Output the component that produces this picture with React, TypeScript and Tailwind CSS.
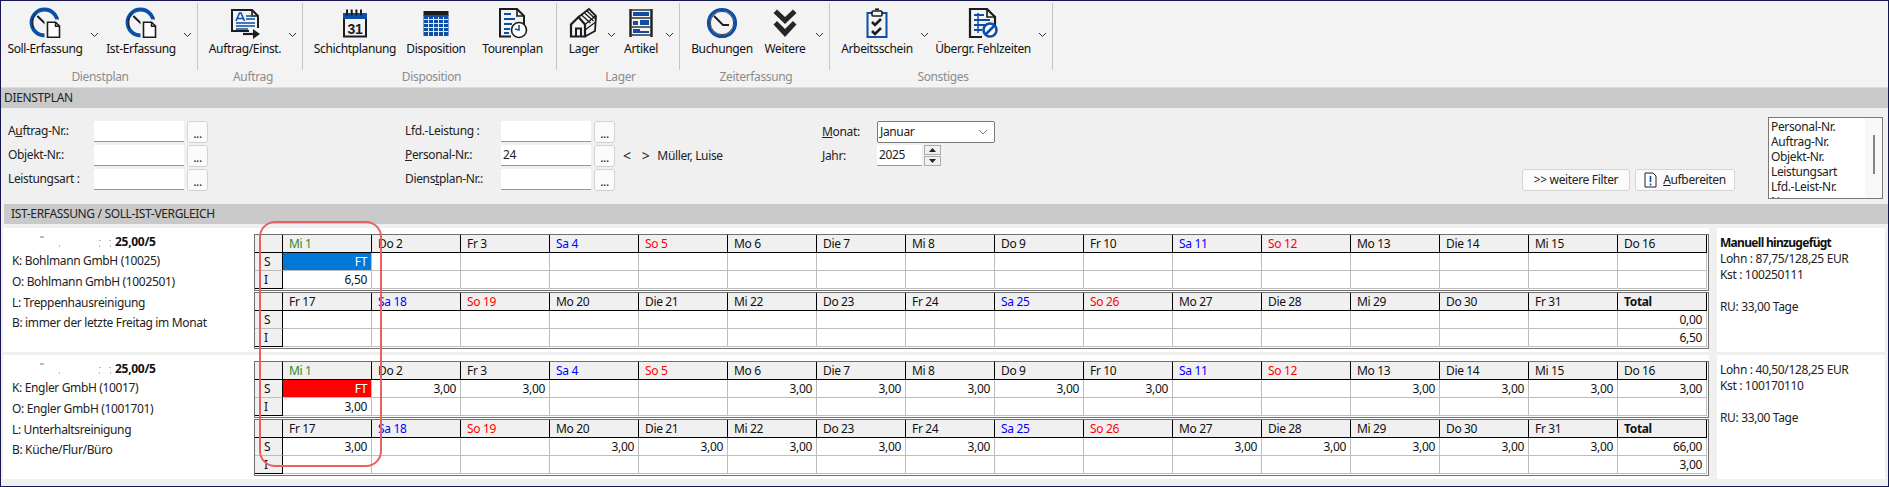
import React from "react";

const Chev = ({ w }: { w: string }) => (
  <div className={`${w} flex justify-center pt-[31px]`}>
    <svg width="9" height="6" viewBox="0 0 9 6" fill="none" className="shrink-0">
      <path d="M1 1l3.5 3.5L8 1" stroke="#333" strokeWidth="1" />
    </svg>
  </div>
);

const B = "#0d4ea6";
const K = "#1c1c1c";

const ClockDoc = () => (
  <svg width="32" height="32" viewBox="0 0 32 32" fill="none">
    <circle cx="15.5" cy="15.5" r="13" stroke={B} strokeWidth="3.8" />
    <path d="M5.2 22A12 12 0 0 1 7 6.5" stroke={K} strokeWidth="1" />
    <path d="M8.3 9l9.4 9" stroke={K} strokeWidth="2" />
    <rect x="15.5" y="12.5" width="17" height="19" fill="#f3f3f3" />
    <path d="M18.5 15.2h8l4 4v11h-12z" fill="#fff" stroke={K} strokeWidth="1.6" />
    <path d="M26.5 15.2v4h4" stroke={K} strokeWidth="1.4" />
  </svg>
);
const AuftragIcon = () => (
  <svg width="32" height="32" viewBox="0 0 32 32" fill="none">
    <path d="M20 24H3V3h20l6 6v12" stroke={K} strokeWidth="2" />
    <path d="M23 3v6h6" stroke={K} strokeWidth="1.6" />
    <path d="M7 14l3.5-8h1.5l3.5 8M8.5 11.5h6" stroke={B} strokeWidth="1.6" />
    <path d="M17 9h7M17 12h9M7 16h19M7 19h19M7 22h12" stroke={B} strokeWidth="1.6" />
    <path d="M14 27h11" stroke={K} strokeWidth="2.2" />
    <path d="M24 22l7 5-7 5z" fill={K} />
  </svg>
);
const CalIcon = () => (
  <svg width="32" height="32" viewBox="0 0 32 32" fill="none">
    <rect x="4" y="6" width="24" height="6" fill={B} />
    <path d="M8 2.5v6M12.7 2.5v6M17.4 2.5v6M22 2.5v6" stroke={K} strokeWidth="2" />
    <path d="M5 12v17.5h22V12" stroke={K} strokeWidth="2" />
    <text x="16" y="26.5" textAnchor="middle" fontSize="14" fontWeight="700" fill={K} fontFamily="Liberation Sans, sans-serif">31</text>
  </svg>
);
const GridIcon = () => (
  <svg width="32" height="32" viewBox="0 0 32 32" fill="none">
    <rect x="3.5" y="4" width="25" height="5" fill={K} />
    <rect x="3.5" y="8" width="25" height="21" fill={B} />
    <path d="M8.5 10v19M13.5 10v19M18.5 10v19M23.5 10v19M4 12.5h24M4 16.5h24M4 20.5h24M4 24.5h24" stroke="#dfe8f5" strokeWidth="1" />
  </svg>
);
const TourIcon = () => (
  <svg width="32" height="32" viewBox="0 0 32 32" fill="none">
    <path d="M14 29.5H3V2h17l7 7v9" stroke={K} strokeWidth="2" />
    <path d="M20 2v7h7" stroke={K} strokeWidth="1.6" />
    <path d="M7 7h7M7 12h11M7 17h8M7 22h6M7 26h5" stroke={B} strokeWidth="2" />
    <circle cx="22" cy="23" r="7.5" fill="#fff" stroke={K} strokeWidth="1.6" />
    <path d="M22 18v5l-4-1" stroke={B} strokeWidth="1.6" />
  </svg>
);
const LagerIcon = () => (
  <svg width="32" height="32" viewBox="0 0 32 32" fill="none">
    <path d="M3 29.5V17.5L10.5 10l6.5 7.5v12z" stroke={K} strokeWidth="2.2" fill="#f3f3f3" />
    <path d="M8 29.5v-8h5v8" stroke={K} strokeWidth="2" />
    <path d="M10.5 10L21 2l7 7-1 15-10 5.5" stroke={K} strokeWidth="1.8" />
    <path d="M13.5 8l9 8M16.5 6l9 8M19 4l8 7.5M17 17.5L27.5 9M17 23l10-7.5" stroke={K} strokeWidth="1.3" />
  </svg>
);
const ShelfIcon = () => (
  <svg width="32" height="32" viewBox="0 0 32 32" fill="none">
    <path d="M5.5 2v28M26.5 2v28" stroke={K} strokeWidth="2.4" />
    <path d="M5 3h22M5 11h22M5 20h22M5 28h22" stroke="#333" strokeWidth="1.6" />
    <rect x="8" y="5" width="16" height="4" fill={B} />
    <rect x="8" y="14" width="5" height="4" fill={B} />
    <rect x="15" y="13" width="9" height="5" fill={B} />
    <rect x="8" y="22" width="7" height="4" fill={B} />
    <rect x="15" y="24" width="9" height="2" fill={B} />
  </svg>
);
const BigClock = () => (
  <svg width="32" height="32" viewBox="0 0 32 32" fill="none">
    <circle cx="16" cy="16" r="13.5" stroke={B} strokeWidth="3.2" fill="#f3f3f3" />
    <circle cx="16" cy="16" r="11.6" stroke={K} strokeWidth="0.8" />
    <path d="M8 9l9 9h6" stroke={K} strokeWidth="1.8" />
  </svg>
);
const DoubleDown = () => (
  <svg width="32" height="32" viewBox="0 0 32 32" fill="#262626">
    <path d="M8 2.5L4.5 6 16 17 27.5 6 24 2.5l-8 7.5z" />
    <path d="M8 14l-3.5 3.5L16 30l11.5-12.5L24 14l-8 8z" />
  </svg>
);
const Clip = () => (
  <svg width="32" height="32" viewBox="0 0 32 32" fill="none">
    <path d="M11 6H6.5v24h19V6H21" stroke={B} strokeWidth="2" />
    <rect x="11" y="4" width="10" height="5" rx="1" fill="#f3f3f3" stroke={K} strokeWidth="1.6" />
    <path d="M14 2.2h4" stroke={K} strokeWidth="1.6" />
    <path d="M11 15l3 3 6-6M11 24l3 3 6-6" stroke={K} strokeWidth="2.6" />
  </svg>
);
const FehlIcon = () => (
  <svg width="32" height="32" viewBox="0 0 32 32" fill="none">
    <path d="M15 30H3V2h17l8 8v8" stroke={K} strokeWidth="2.2" fill="#f3f3f3" />
    <path d="M20 2v8h8" stroke={K} strokeWidth="1.6" />
    <path d="M7 8h10M7 13h16M7 18h11M7 23h8" stroke={B} strokeWidth="2" />
    <path d="M11 6v20" stroke={B} strokeWidth="1.5" />
    <circle cx="23" cy="23" r="6.5" fill="#fff" stroke={B} strokeWidth="2.6" />
    <path d="M18.5 27.5l9-9" stroke={B} strokeWidth="2.6" />
  </svg>
);

const Item = ({ w, label, children }: { w: string; label: string; children: React.ReactNode }) => (
  <div className={`${w} flex flex-col items-center pt-[6px]`}>
    {children}
    <div className="mt-[2px] leading-4 whitespace-nowrap text-[#111]">{label}</div>
  </div>
);

const Group = ({ w, label, children }: { w: string; label: string; children: React.ReactNode }) => (
  <div className={`${w} flex flex-col`}>
    <div className="flex h-[68px]">{children}</div>
    <div className="text-center leading-4 text-[#8c8c8c]">{label}</div>
  </div>
);
const Sep = () => <div className="w-px h-[67px] mt-[2px] bg-[#c6c6c6]" />;

const Ribbon = () => (
  <div className="flex h-[87px] bg-[#f3f3f3] border-b border-[#dcdcdc]">
    <Group w="w-[196px] pl-[2px]" label="Dienstplan">
      <Item w="w-[84px]" label="Soll-Erfassung"><ClockDoc /></Item>
      <Chev w="w-[14px]" />
      <Item w="w-[80px]" label="Ist-Erfassung"><ClockDoc /></Item>
      <Chev w="w-[12px]" />
    </Group>
    <Sep />
    <Group w="w-[104px] pl-[6px]" label="Auftrag">
      <Item w="w-[82px]" label="Auftrag/Einst."><AuftragIcon /></Item>
      <Chev w="w-[12px]" />
    </Group>
    <Sep />
    <Group w="w-[253px] pl-[4px]" label="Disposition">
      <Item w="w-[96px]" label="Schichtplanung"><CalIcon /></Item>
      <Item w="w-[66px]" label="Disposition"><GridIcon /></Item>
      <Item w="w-[87px]" label="Tourenplan"><TourIcon /></Item>
    </Group>
    <Sep />
    <Group w="w-[122px] pl-[5px]" label="Lager">
      <Item w="w-[44px]" label="Lager"><LagerIcon /></Item>
      <Chev w="w-[11px]" />
      <Item w="w-[48px]" label="Artikel"><ShelfIcon /></Item>
      <Chev w="w-[9px]" />
    </Group>
    <Sep />
    <Group w="w-[149px] pl-[3px]" label="Zeiterfassung">
      <Item w="w-[78px]" label="Buchungen"><BigClock /></Item>
      <Item w="w-[48px]" label="Weitere"><DoubleDown /></Item>
      <Chev w="w-[20px]" />
    </Group>
    <Sep />
    <Group w="w-[222px] pl-[4px]" label="Sonstiges">
      <Item w="w-[86px]" label="Arbeitsschein"><Clip /></Item>
      <Chev w="w-[8px]" />
      <Item w="w-[110px]" label="Übergr. Fehlzeiten"><FehlIcon /></Item>
      <Chev w="w-[8px]" />
    </Group>
    <Sep />
  </div>
);

const Input = ({ value, w }: { value?: string; w: string }) => (
  <div className={`${w} h-[21px] bg-white border-b border-[#9a9a9a] px-[2px] leading-5 text-[#222]`}>{value}</div>
);
const Dots = () => (
  <div className="w-[21px] h-[22px] ml-[3px] rounded-[3px] border border-[#d2d2d2] bg-[#fbfbfb] text-center leading-[23px] text-[#222]">...</div>
);
const Field = ({ label, value, extra, lw }: { label: React.ReactNode; value?: string; extra?: React.ReactNode; lw: string }) => (
  <div className="flex items-start h-[24px]">
    <div className={`${lw} leading-[20px] text-[#222]`}>{label}</div>
    <Input value={value} w="w-[90px]" />
    <Dots />
    {extra}
  </div>
);

const Filter = () => (
  <div className="h-[96px] flex pl-[7px] pt-[13px] bg-[#f0f0f0]">
    <div className="w-[397px] shrink-0">
      <Field lw="w-[86px]" label={<>A<u>u</u>ftrag-Nr.:</>} />
      <Field lw="w-[86px]" label="Objekt-Nr.:" />
      <Field lw="w-[86px]" label="Leistungsart :" />
    </div>
    <div className="w-[417px] shrink-0">
      <Field lw="w-[96px]" label="Lfd.-Leistung :" />
      <Field
        lw="w-[96px]"
        label={<><u>P</u>ersonal-Nr.:</>}
        value="24"
        extra={
          <div className="flex text-[#222] leading-[21px]">
            <span className="ml-[8px] text-[14px]">&lt;</span>
            <span className="ml-[11px] text-[14px]">&gt;</span>
            <span className="ml-[8px]">Müller, Luise</span>
          </div>
        }
      />
      <Field lw="w-[96px]" label={<>Diens<u>t</u>plan-Nr.:</>} />
    </div>
    <div className="w-[173px] shrink-0">
      <div className="flex h-[24px]">
        <div className="w-[55px] leading-[21px] text-[#222]"><u>M</u>onat:</div>
        <div className="w-[118px] h-[22px] flex items-center justify-between bg-white border border-[#7a7a7a] rounded-[2px] pl-[2px] pr-[6px] text-[#222]">
          Januar
          <svg width="10" height="6" viewBox="0 0 10 6" fill="none"><path d="M1 1l4 4 4-4" stroke="#777" /></svg>
        </div>
      </div>
      <div className="flex h-[24px]">
        <div className="w-[55px] leading-[21px] text-[#222]"><u>J</u>ahr:</div>
        <Input value="2025" w="w-[45px]" />
        <div className="ml-[2px] w-[17px] h-[21px] flex flex-col gap-px">
          <div className="h-[10px] flex items-center justify-center bg-[#f0f0f0] border border-[#adadad]">
            <svg width="7" height="4" viewBox="0 0 7 4"><path d="M0 4l3.5-4L7 4z" fill="#222" /></svg>
          </div>
          <div className="h-[10px] flex items-center justify-center bg-[#f0f0f0] border border-[#adadad]">
            <svg width="7" height="4" viewBox="0 0 7 4"><path d="M0 0l3.5 4L7 0z" fill="#222" /></svg>
          </div>
        </div>
      </div>
    </div>
    <div className="w-[740px] shrink-0 flex justify-end items-start pt-[48px] gap-[5px]">
      <div className="w-[108px] h-[22px] flex items-center justify-center bg-[#fbfbfb] border border-[#d4d4d4] rounded-[3px] text-[#222]">&gt;&gt; weitere Filter</div>
      <div className="w-[100px] h-[22px] flex items-center justify-center gap-[6px] bg-[#fbfbfb] border border-[#d4d4d4] rounded-[3px] text-[#222]">
        <svg width="13" height="16" viewBox="0 0 13 16" fill="none">
          <path d="M1 1h8l3 3v11H1z" fill="#fff" stroke="#222" />
          <path d="M6.5 4v6M6.5 11.5v2" stroke="#0d4ea6" strokeWidth="1.6" />
        </svg>
        <span><u>A</u>ufbereiten</span>
      </div>
    </div>
    <div className="ml-[33px] -mt-[4px] w-[115px] h-[82px] flex bg-white border border-[#7a7a7a] overflow-hidden leading-[15px] text-[#222]">
      <div className="flex-1 pl-[2px] pt-px whitespace-nowrap">
        <div>Personal-Nr.</div>
        <div>Auftrag-Nr.</div>
        <div>Objekt-Nr.</div>
        <div>Leistungsart</div>
        <div>Lfd.-Leist-Nr.</div>
        <div>Name</div>
      </div>
      <div className="w-[17px] bg-[#f8f8f8] flex justify-center pt-[17px]">
        <div className="w-[2px] h-[39px] bg-[#858585]" />
      </div>
    </div>
  </div>
);

const T1 = ["Mi 1", "Do 2", "Fr 3", "Sa 4", "So 5", "Mo 6", "Die 7", "Mi 8", "Do 9", "Fr 10", "Sa 11", "So 12", "Mo 13", "Die 14", "Mi 15", "Do 16"];
const T2 = ["Fr 17", "Sa 18", "So 19", "Mo 20", "Die 21", "Mi 22", "Do 23", "Fr 24", "Sa 25", "So 26", "Mo 27", "Die 28", "Mi 29", "Do 30", "Fr 31", "Total"];

const dayColor = (d: string) => {
  if (d === "Mi 1") return "text-[#2e8b2e]";
  if (d.startsWith("Sa")) return "text-[#0000ff]";
  if (d.startsWith("So")) return "text-[#ff0000]";
  if (d === "Total") return "font-bold text-[#111]";
  return "text-[#111]";
};

const Cal = ({ days, s, i, ft }: { days: string[]; s: Record<number, string>; i: Record<number, string>; ft?: string }) => (
  <div className="w-[1455px] border border-[#707070] pr-px h-[57px] bg-white">
    <div className="grid grid-cols-[28px_repeat(16,89px)] grid-rows-[18px_18px_18px] leading-[17px]">
      <div className="bg-[#f0f0f0] border-r border-b border-black" />
      {days.map((d) => (
        <div key={d} className={`bg-[#f0f0f0] border-r border-b border-black pl-[6px] whitespace-nowrap ${dayColor(d)}`}>{d}</div>
      ))}
      {(["S", "I"] as const).map((l) => (
        <React.Fragment key={l}>
          <div className={`bg-[#f0f0f0] border-r border-black pl-[9px] text-[#111] border-b ${l === "S" ? "border-b-[#bdbdbd]" : "border-b-black"}`}>{l}</div>
          {days.map((_, c) => {
            const v = l === "S" ? s[c] : i[c];
            const isFt = l === "S" && c === 0 && ft;
            return (
              <div
                key={c}
                className={`text-right pr-[4px] border-r border-b border-[#bdbdbd] ${isFt ? (ft === "blue" ? "bg-[#0078d7] text-white" : "bg-[#ff0000] text-white") : "text-[#111]"}`}
              >
                {v}
              </div>
            );
          })}
        </React.Fragment>
      ))}
    </div>
  </div>
);

const Mask = () => (
  <svg width="100" height="14" viewBox="0 0 100 14" className="shrink-0">
    <path d="M28 2h4M47 11h1M88 5v1M87 11h1M98 5v1M98 11h1" stroke="#777" strokeWidth="1" />
  </svg>
);

const Row = ({ l, r, s1, i1, s2, i2, ft }: {
  l: string[]; r: React.ReactNode; s1: Record<number, string>; i1: Record<number, string>; s2: Record<number, string>; i2: Record<number, string>; ft: string;
}) => (
  <div className="flex h-[124px] ml-[2px] mb-[3px]">
    <div className="w-[1706px] bg-white flex pt-[6px]">
      <div className="w-[251px] pl-[9px] text-[#222]">
        <div className="flex items-center h-[16px]">
          <div className="w-[103px]"><Mask /></div>
          <span className="font-bold text-[#111] tracking-[-0.3px]">25,00/5</span>
        </div>
        <div className="mt-[1px] leading-5">{l[0]}</div>
        <div className="mt-[1px] leading-5">{l[1]}</div>
        <div className="mt-px leading-5">{l[2]}</div>
        <div className="leading-5">{l[3]}</div>
      </div>
      <div className="flex flex-col gap-px">
        <Cal days={T1} s={s1} i={i1} ft={ft} />
        <Cal days={T2} s={s2} i={i2} />
      </div>
    </div>
    <div className="ml-[8px] w-[168px] bg-white pl-[3px] pt-[7px] leading-4 text-[#222]">{r}</div>
  </div>
);

const v3 = (idx: number[]) => Object.fromEntries(idx.map((n) => [n, "3,00"])) as Record<number, string>;

export default function App() {
  return (
    <div className="relative w-[1889px] h-[487px] overflow-hidden bg-[#f0f0f0] border border-[#17174f] text-[12px] tracking-[-0.35px] font-['Noto_Sans','Open_Sans',sans-serif]">
      <Ribbon />
      <div className="h-[20px] bg-[#c9c9c9] pl-[3px] leading-5 text-[#222]">DIENSTPLAN</div>
      <Filter />
      <div className="h-[20px] ml-[3px] bg-[#c9c9c9] pl-[7px] leading-5 text-[#222]">IST-ERFASSUNG / SOLL-IST-VERGLEICH</div>
      <div className="h-[4px]" />
      <Row
        l={["K: Bohlmann GmbH (10025)", "O: Bohlmann GmbH (1002501)", "L: Treppenhausreinigung", "B: immer der letzte Freitag im Monat"]}
        ft="blue"
        s1={{ 0: "FT" }}
        i1={{ 0: "6,50" }}
        s2={{ 15: "0,00" }}
        i2={{ 15: "6,50" }}
        r={<>
          <div className="font-bold text-[#111] tracking-[-0.7px]">Manuell hinzugefügt</div>
          <div>Lohn : 87,75/128,25 EUR</div>
          <div>Kst : 100250111</div>
          <div className="h-4" />
          <div>RU: 33,00 Tage</div>
        </>}
      />
      <Row
        l={["K: Engler GmbH (10017)", "O: Engler GmbH (1001701)", "L: Unterhaltsreinigung", "B: Küche/Flur/Büro"]}
        ft="red"
        s1={{ 0: "FT", ...v3([1, 2, 5, 6, 7, 8, 9, 12, 13, 14, 15]) }}
        i1={{ 0: "3,00" }}
        s2={{ ...v3([0, 3, 4, 5, 6, 7, 10, 11, 12, 13, 14]), 15: "66,00" }}
        i2={{ 15: "3,00" }}
        r={<>
          <div>Lohn : 40,50/128,25 EUR</div>
          <div>Kst : 100170110</div>
          <div className="h-4" />
          <div>RU: 33,00 Tage</div>
        </>}
      />
      <div className="absolute left-[258px] top-[220px] w-[123px] h-[246px] rounded-[16px] border-2 border-[#e8605f] pointer-events-none" />
    </div>
  );
}
